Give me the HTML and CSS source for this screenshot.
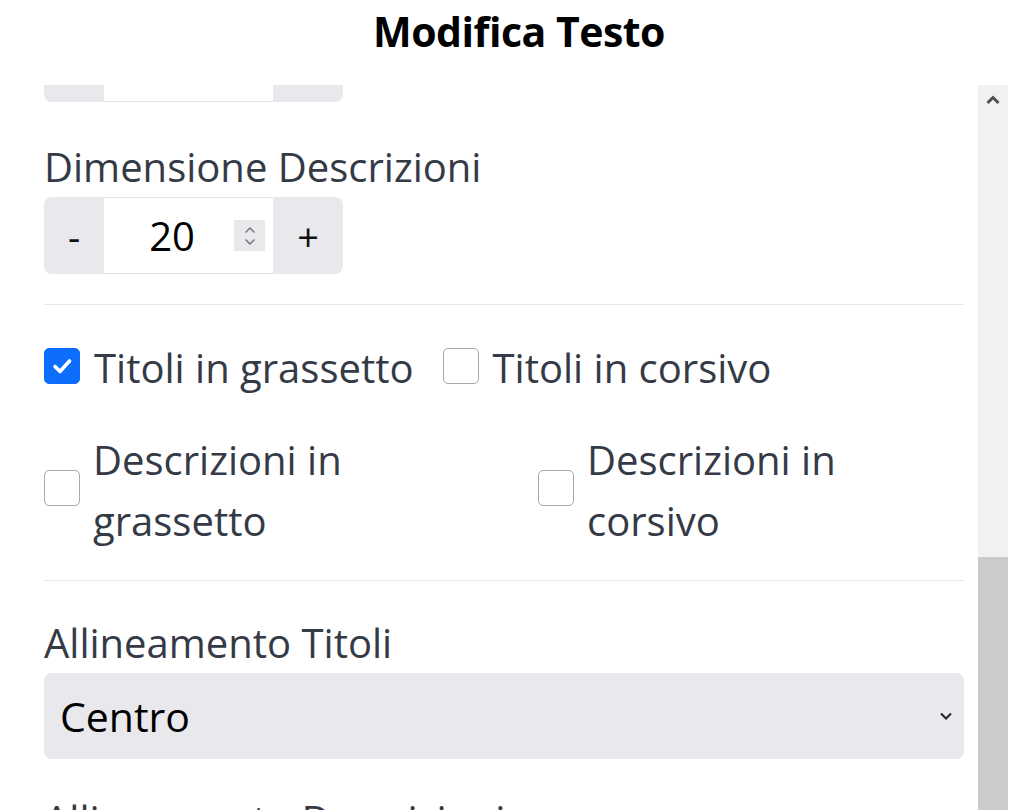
FILE: index.html
```html
<!DOCTYPE html>
<html lang="it">
<head>
<meta charset="utf-8">
<title>Modifica Testo</title>
<link rel="stylesheet" href="styles.css">
</head>
<body>
<header class="header">
  <h1 class="title">Modifica Testo</h1>
</header>
<div class="panel">
  <div class="scroll-area">
    <div class="content">
      <div class="stepper stepper-first">
        <button class="step-btn step-minus" type="button">-</button>
        <div class="step-input"><span class="step-value">18</span></div>
        <button class="step-btn step-plus" type="button">+</button>
      </div>

      <div class="field">
        <div class="label">Dimensione Descrizioni</div>
        <div class="stepper">
          <button class="step-btn step-minus" type="button">-</button>
          <div class="step-input">
            <span class="step-value">20</span>
            <span class="spin">
              <svg width="14" height="24" viewBox="0 0 14 24"><path d="M2.5 8.5 L7 4 L11.5 8.5" fill="none" stroke="#6f6f78" stroke-width="1.4"/><path d="M2.5 15.5 L7 20 L11.5 15.5" fill="none" stroke="#6f6f78" stroke-width="1.4"/></svg>
            </span>
          </div>
          <button class="step-btn step-plus" type="button">+</button>
        </div>
      </div>

      <hr class="sep">

      <div class="check-row">
        <label class="check">
          <span class="box box-on">
            <svg width="24" height="24" viewBox="0 0 24 24"><path d="M5 12.5 L10 17.5 L19.5 7" fill="none" stroke="#fff" stroke-width="3.6" stroke-linecap="round" stroke-linejoin="round"/></svg>
          </span>
          <span class="check-text">Titoli in grassetto</span>
        </label>
        <label class="check">
          <span class="box"></span>
          <span class="check-text">Titoli in corsivo</span>
        </label>
      </div>

      <div class="check-grid">
        <label class="check">
          <span class="box"></span>
          <span class="check-text">Descrizioni in grassetto</span>
        </label>
        <label class="check">
          <span class="box"></span>
          <span class="check-text">Descrizioni in corsivo</span>
        </label>
      </div>

      <hr class="sep sep-2">

      <div class="field field-select">
        <div class="label">Allineamento Titoli</div>
        <div class="select">
          <span class="select-value">Centro</span>
          <svg class="select-caret" width="16" height="12" viewBox="0 0 16 12"><path d="M3 3.5 L8 8.5 L13 3.5" fill="none" stroke="#222" stroke-width="2"/></svg>
        </div>
      </div>

      <div class="field">
        <div class="label">Allineamento Descrizioni</div>
        <div class="select">
          <span class="select-value">Sinistra</span>
        </div>
      </div>
    </div>
  </div>
  <div class="scrollbar">
    <div class="sb-up">
      <svg width="16" height="12" viewBox="0 0 16 12"><path d="M2.5 9 L8 3.5 L13.5 9" fill="none" stroke="#505050" stroke-width="3"/></svg>
    </div>
    <div class="sb-track"></div>
    <div class="sb-thumb"></div>
  </div>
</div>
</body>
</html>
```

FILE: styles.css
```css
* { box-sizing: border-box; }

html, body {
  margin: 0;
  padding: 0;
  background: #fff;
}

body {
  font-family: "Open Sans", "Noto Sans", sans-serif;
  color: #343a46;
  width: 1030px;
  height: 810px;
  overflow: hidden;
}

.header {
  height: 85px;
  display: flex;
  justify-content: center;
  padding-left: 8px;
}

.title {
  margin: 0;
  padding-top: 4px;
  font-size: 41px;
  line-height: 54px;
  font-weight: 700;
  color: #000;
  letter-spacing: -0.5px;
}

.panel {
  display: flex;
  height: 725px;
  margin: 0 22px;
}

.scroll-area {
  flex: 1;
  overflow: hidden;
  padding: 0 14px 0 22px;
}

.content {
  display: flex;
  flex-direction: column;
}

/* stepper */
.stepper {
  display: flex;
  height: 77px;
  width: 299px;
}

.stepper-first {
  margin-top: -60px;
  margin-bottom: 35px;
}

.step-btn {
  border: 0;
  margin: 0;
  padding: 0;
  background: #e8e8ed;
  font-family: "Open Sans", "Noto Sans", sans-serif;
  font-size: 38px;
  color: #111;
  display: flex;
  align-items: center;
  justify-content: center;
}

.step-minus {
  width: 60px;
  border-radius: 8px 0 0 8px;
}

.step-plus {
  width: 70px;
  border-radius: 0 8px 8px 0;
}

.step-input {
  width: 169px;
  background: #fff;
  border-top: 1px solid #e4e4e8;
  border-bottom: 1px solid #e4e4e8;
  display: flex;
  align-items: center;
  padding-right: 8px;
}

.step-value {
  flex: 1;
  text-align: center;
  padding-left: 6px;
  font-size: 40px;
  color: #000;
  line-height: 1;
}

.stepper-first .step-value {
  visibility: hidden;
}

.spin {
  width: 31px;
  height: 31px;
  background: #e9e9ec;
  display: flex;
  align-items: center;
  justify-content: center;
}

/* labels */
.field {
  display: flex;
  flex-direction: column;
  margin-bottom: 27px;
}

.field-select {
  margin-bottom: 31px;
}

.label {
  font-size: 40px;
  line-height: 60px;
}

.sep {
  border: 0;
  border-top: 1px solid #e6e6e9;
  margin: 3px 0 32px 0;
  width: 100%;
}

.sep-2 {
  margin: 29px 0 32px 0;
}

/* checks */
.check-row {
  display: flex;
  gap: 29px;
  margin-bottom: 31px;
}

.check-grid {
  display: grid;
  grid-template-columns: 426px 426px;
  column-gap: 68px;
}

.check {
  display: flex;
  align-items: center;
  gap: 14px;
}

.check-grid .check {
  gap: 13px;
}

.check-text {
  font-size: 40px;
  line-height: 61px;
}

.box {
  flex: none;
  width: 36px;
  height: 36px;
  margin-bottom: 4px;
  border: 1.5px solid #a9a9ae;
  border-radius: 5px;
  background: #fff;
  display: flex;
  align-items: center;
  justify-content: center;
}

.box-on {
  background: #0d6efd;
  border-color: #0d6efd;
}

/* select */
.select {
  height: 86px;
  background: #e8e8ed;
  border-radius: 8px;
  display: flex;
  align-items: center;
  justify-content: space-between;
  padding: 0 10px 0 16px;
}

.select-value {
  font-size: 41px;
  color: #000;
}

/* scrollbar */
.scrollbar {
  width: 30px;
  display: flex;
  flex-direction: column;
  background: #f1f1f1;
}

.sb-up {
  height: 30px;
  display: flex;
  align-items: center;
  justify-content: center;
}

.sb-track {
  flex: 1;
}

.sb-thumb {
  height: 253px;
  background: #cbcbcb;
}
```
